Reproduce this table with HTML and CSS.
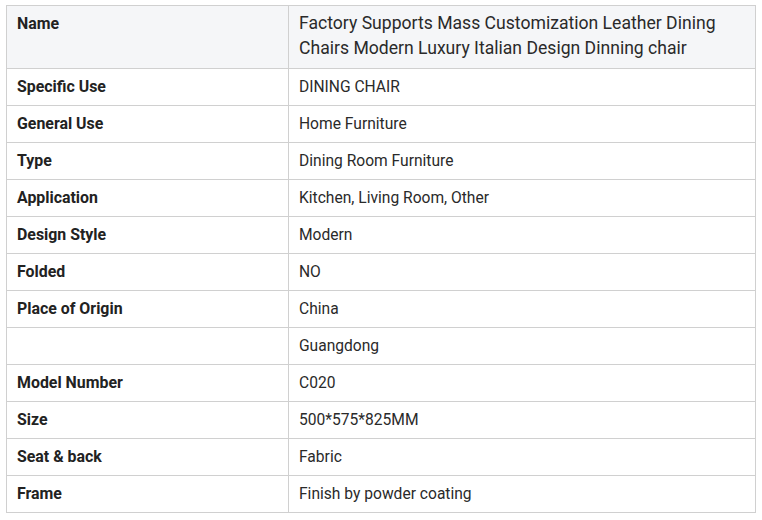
FILE: index.html
```html
<!DOCTYPE html>
<html>
<head>
<meta charset="utf-8">
<link rel="stylesheet" href="styles.css">
</head>
<body>
<table class="spec">
  <colgroup><col class="c1"><col class="c2"></colgroup>
  <tr class="head"><th>Name</th><td>Factory Supports Mass Customization Leather Dining Chairs Modern Luxury Italian Design Dinning chair</td></tr>
  <tr><th>Specific Use</th><td>DINING CHAIR</td></tr>
  <tr><th>General Use</th><td>Home Furniture</td></tr>
  <tr><th>Type</th><td>Dining Room Furniture</td></tr>
  <tr><th>Application</th><td>Kitchen, Living Room, Other</td></tr>
  <tr><th>Design Style</th><td>Modern</td></tr>
  <tr><th>Folded</th><td>NO</td></tr>
  <tr><th>Place of Origin</th><td>China</td></tr>
  <tr><th></th><td>Guangdong</td></tr>
  <tr><th>Model Number</th><td>C020</td></tr>
  <tr><th>Size</th><td>500*575*825MM</td></tr>
  <tr><th>Seat &amp; back</th><td>Fabric</td></tr>
  <tr><th>Frame</th><td>Finish by powder coating</td></tr>
</table>
</body>
</html>
```

FILE: styles.css
```css
html, body { background: #fff; }
body {
  margin: 5px 6px;
  font-family: Roboto, "Liberation Sans", sans-serif;
  color: #222;
}
.spec {
  width: 750px;
  border-collapse: collapse;
  table-layout: fixed;
}
.spec .c1 { width: 282px; }
.spec th, .spec td {
  border: 1px solid #d0d0d0;
  padding: 8px 10px;
  line-height: 20px;
  text-align: left;
  vertical-align: top;
}
.spec th {
  font-size: 15.9px;
  font-weight: 700;
}
.spec td {
  font-size: 15.6px;
  font-weight: 400;
  color: #2a2a2a;
}
.spec .head th, .spec .head td {
  background: #f5f6f8;
  padding: 5px 10px 7px;
  line-height: 25px;
}
.spec .head td { font-size: 17.6px; }
```
